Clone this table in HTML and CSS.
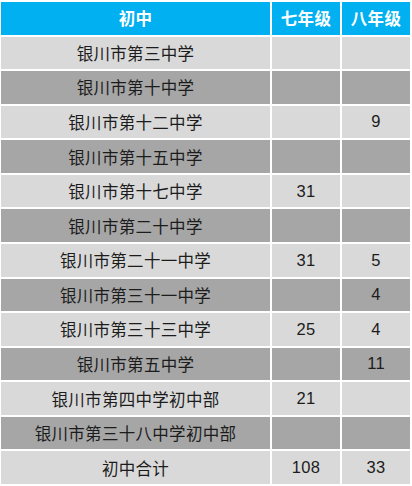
FILE: index.html
```html
<!DOCTYPE html>
<html lang="zh">
<head>
<meta charset="utf-8">
<link rel="stylesheet" href="styles.css">
</head>
<body>
<div class="sheet">
  <div class="cell head">初中</div><div class="cell head">七年级</div><div class="cell head">八年级</div>
  <div class="cell light">银川市第三中学</div><div class="cell light"></div><div class="cell light"></div>
  <div class="cell dark">银川市第十中学</div><div class="cell dark"></div><div class="cell dark"></div>
  <div class="cell light">银川市第十二中学</div><div class="cell light"></div><div class="cell light">9</div>
  <div class="cell dark">银川市第十五中学</div><div class="cell dark"></div><div class="cell dark"></div>
  <div class="cell light">银川市第十七中学</div><div class="cell light">31</div><div class="cell light"></div>
  <div class="cell dark">银川市第二十中学</div><div class="cell dark"></div><div class="cell dark"></div>
  <div class="cell light">银川市第二十一中学</div><div class="cell light">31</div><div class="cell light">5</div>
  <div class="cell dark">银川市第三十一中学</div><div class="cell dark"></div><div class="cell dark">4</div>
  <div class="cell light">银川市第三十三中学</div><div class="cell light">25</div><div class="cell light">4</div>
  <div class="cell dark">银川市第五中学</div><div class="cell dark"></div><div class="cell dark">11</div>
  <div class="cell light">银川市第四中学初中部</div><div class="cell light">21</div><div class="cell light"></div>
  <div class="cell dark">银川市第三十八中学初中部</div><div class="cell dark"></div><div class="cell dark"></div>
  <div class="cell light">初中合计</div><div class="cell light">108</div><div class="cell light">33</div>
</div>
</body>
</html>
```
FILE: styles.css
```css
html, body {
  margin: 0;
  padding: 0;
  background: #ffffff;
}
.sheet {
  box-sizing: border-box;
  width: 412px;
  height: 486px;
  padding: 2px 2px 2px 1px;
  display: grid;
  grid-template-columns: 269px 68px 68px;
  grid-template-rows: repeat(14, 1fr);
  gap: 2px;
  font-family: "Liberation Sans", "Noto Sans CJK SC", sans-serif;
  font-size: 16.5px;
  color: #1c1c1c;
}
.cell {
  display: flex;
  align-items: center;
  justify-content: center;
  letter-spacing: 0.3px;
}
.head {
  background: #00b0f0;
  color: #ffffff;
  font-weight: bold;
}
.light {
  background: #d9d9d9;
}
.dark {
  background: #a6a6a6;
}
```
